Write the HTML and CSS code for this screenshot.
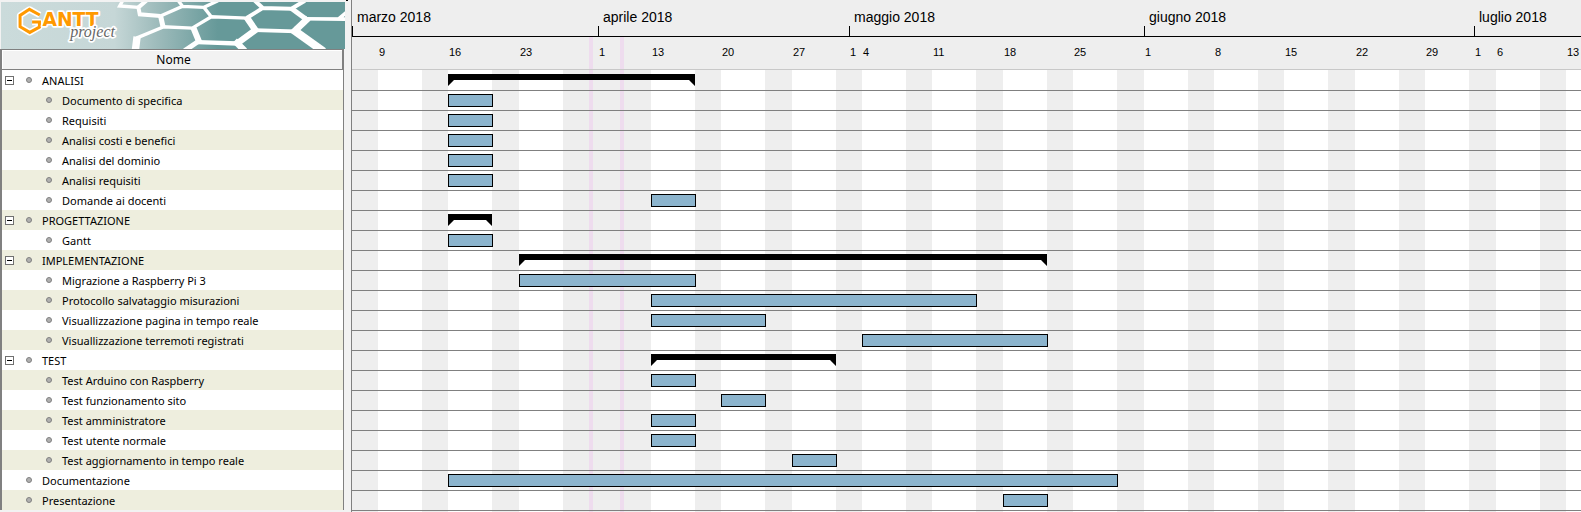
FILE: index.html
```html
<!DOCTYPE html>
<html lang="it">
<head>
<meta charset="utf-8">
<title>GanttProject</title>
<link rel="stylesheet" href="styles.css">
</head>
<body>
<main class="app">
  <section class="tree">
    <svg class="banner" viewBox="0 0 1029 141" preserveAspectRatio="xMinYMin slice" role="img" aria-label="Gantt project">
      <defs>
        <linearGradient id="sky" x1="0" x2="1" y1="0" y2="0">
          <stop offset="0" stop-color="#cbdbdb"/>
          <stop offset="0.33" stop-color="#c6d7d7"/>
          <stop offset="0.45" stop-color="#9fbcbc"/>
          <stop offset="0.63" stop-color="#669999"/>
          <stop offset="1" stop-color="#669999"/>
        </linearGradient>
      </defs>
      <rect width="1029" height="141" fill="url(#sky)"/>
      <g transform="translate(327 -6)" fill="none" stroke="#fff" stroke-width="10">
        <path d="M38 0L28 18L84 22"/>
        <path stroke-width="12" d="M110 0L84 22L88 43L150 48"/>
        <path d="M150 48L216 19L202 0M216 19L280 22L322 2M280 22L302 50"/>
        <path stroke-width="15" d="M150 46L158 82"/>
        <path d="M156 80L245 84L302 50L410 54M160 80L78 114"/>
        <path stroke-width="22" d="M80 110L75 150"/>
        <path stroke-width="18" d="M248 82L266 126"/>
        <path stroke-width="15" d="M266 122L222 152"/>
        <path stroke-width="13" d="M262 126L380 130"/>
        <path stroke-width="19" d="M374 134L434 90L408 52M372 122L402 152"/>
        <path stroke-width="12" d="M408 54L456 24L430 0M452 24L542 26L582 2"/>
        <path stroke-width="15" d="M540 24L584 56"/>
        <path stroke-width="11" d="M576 56L706 57M684 56L708 36M432 90L556 94"/>
        <path stroke-width="20" d="M548 96L592 54"/>
        <path stroke-width="24" d="M546 88L638 154"/>
      </g>
      <path class="halo" d="M116 39L85 22L57 40V74L86 91L115 75V60H93"/>
      <path class="logo-g" d="M116 39L85 22L57 40V74L86 91L115 75V60H93"/>
      <text class="logo-word" x="124" y="73">ANTT</text>
      <text class="logo-sub" x="207" y="106">project</text>
    </svg>
    <table class="tasks">
      <thead><tr><th scope="col">Nome</th></tr></thead>
      <tbody>
        <tr><td><div class="task"><button class="fold" aria-label="Comprimi ANALISI"></button><i class="dot"></i>ANALISI</div></td></tr>
        <tr><td><div class="task sub"><i class="dot"></i>Documento di specifica</div></td></tr>
        <tr><td><div class="task sub"><i class="dot"></i>Requisiti</div></td></tr>
        <tr><td><div class="task sub"><i class="dot"></i>Analisi costi e benefici</div></td></tr>
        <tr><td><div class="task sub"><i class="dot"></i>Analisi del dominio</div></td></tr>
        <tr><td><div class="task sub"><i class="dot"></i>Analisi requisiti</div></td></tr>
        <tr><td><div class="task sub"><i class="dot"></i>Domande ai docenti</div></td></tr>
        <tr><td><div class="task"><button class="fold" aria-label="Comprimi PROGETTAZIONE"></button><i class="dot"></i>PROGETTAZIONE</div></td></tr>
        <tr><td><div class="task sub"><i class="dot"></i>Gantt</div></td></tr>
        <tr><td><div class="task"><button class="fold" aria-label="Comprimi IMPLEMENTAZIONE"></button><i class="dot"></i>IMPLEMENTAZIONE</div></td></tr>
        <tr><td><div class="task sub"><i class="dot"></i>Migrazione a Raspberry Pi 3</div></td></tr>
        <tr><td><div class="task sub"><i class="dot"></i>Protocollo salvataggio misurazioni</div></td></tr>
        <tr><td><div class="task sub"><i class="dot"></i>Visuallizzazione pagina in tempo reale</div></td></tr>
        <tr><td><div class="task sub"><i class="dot"></i>Visuallizzazione terremoti registrati</div></td></tr>
        <tr><td><div class="task"><button class="fold" aria-label="Comprimi TEST"></button><i class="dot"></i>TEST</div></td></tr>
        <tr><td><div class="task sub"><i class="dot"></i>Test Arduino con Raspberry</div></td></tr>
        <tr><td><div class="task sub"><i class="dot"></i>Test funzionamento sito</div></td></tr>
        <tr><td><div class="task sub"><i class="dot"></i>Test amministratore</div></td></tr>
        <tr><td><div class="task sub"><i class="dot"></i>Test utente normale</div></td></tr>
        <tr><td><div class="task sub"><i class="dot"></i>Test aggiornamento in tempo reale</div></td></tr>
        <tr><td><div class="task leaf"><i class="dot"></i>Documentazione</div></td></tr>
        <tr><td><div class="task leaf"><i class="dot"></i>Presentazione</div></td></tr>
      </tbody>
    </table>
  </section>
  <div class="splitter"><i class="arrow"></i></div>
  <section class="chart">
    <div class="calendar">
      <i class="off" style="width:26px"></i><i class="work"></i>
      <i class="off" style="width:26px"></i><i class="work"></i>
      <i class="off" style="width:27px"></i><i class="work"></i>
      <i class="off" style="width:26px"></i><i class="holiday"></i><i class="off" style="width:27px"></i><i class="holiday"></i><i class="off" style="width:27px"></i><i class="work"></i>
      <i class="off" style="width:26px"></i><i class="work"></i>
      <i class="off" style="width:27px"></i><i class="work"></i>
      <i class="off" style="width:26px"></i><i class="work"></i>
      <i class="off" style="width:26px"></i><i class="work"></i>
      <i class="off" style="width:27px"></i><i class="work"></i>
      <i class="off" style="width:26px"></i><i class="work"></i>
      <i class="off" style="width:27px"></i><i class="work"></i>
      <i class="off" style="width:26px"></i><i class="work"></i>
      <i class="off" style="width:26px"></i><i class="work"></i>
      <i class="off" style="width:27px"></i><i class="work"></i>
      <i class="off" style="width:26px"></i><i class="work"></i>
      <i class="off" style="width:27px"></i><i class="work"></i>
      <i class="off" style="width:26px"></i><i class="work"></i>
    </div>
    <div class="plan">
      <div class="months">
        <div class="month" style="width:246px">marzo 2018</div>
        <div class="month" style="width:251px">aprile 2018</div>
        <div class="month" style="width:295px">maggio 2018</div>
        <div class="month" style="width:330px">giugno 2018</div>
        <div class="month" style="width:107px">luglio 2018</div>
      </div>
      <div class="days">
        <span style="width:70px">9</span><span style="width:71px">16</span><span style="width:79px">23</span><span style="width:53px">1</span><span style="width:70px">13</span><span style="width:71px">20</span><span style="width:57px">27</span><span style="width:13px">1</span><span style="width:70px">4</span><span style="width:71px">11</span><span style="width:70px">18</span><span style="width:71px">25</span><span style="width:70px">1</span><span style="width:70px">8</span><span style="width:71px">15</span><span style="width:70px">22</span><span style="width:49px">29</span><span style="width:22px">1</span><span style="width:70px">6</span><span style="width:15px">13</span>
      </div>
      <div class="rows">
        <div class="row"><div class="group" style="margin-left:96px;width:247px"></div></div>
        <div class="row"><div class="bar" style="margin-left:96px;width:45px"></div></div>
        <div class="row"><div class="bar" style="margin-left:96px;width:45px"></div></div>
        <div class="row"><div class="bar" style="margin-left:96px;width:45px"></div></div>
        <div class="row"><div class="bar" style="margin-left:96px;width:45px"></div></div>
        <div class="row"><div class="bar" style="margin-left:96px;width:45px"></div></div>
        <div class="row"><div class="bar" style="margin-left:299px;width:45px"></div></div>
        <div class="row"><div class="group" style="margin-left:96px;width:44px"></div></div>
        <div class="row"><div class="bar" style="margin-left:96px;width:45px"></div></div>
        <div class="row"><div class="group" style="margin-left:167px;width:528px"></div></div>
        <div class="row"><div class="bar" style="margin-left:167px;width:177px"></div></div>
        <div class="row"><div class="bar" style="margin-left:299px;width:326px"></div></div>
        <div class="row"><div class="bar" style="margin-left:299px;width:115px"></div></div>
        <div class="row"><div class="bar" style="margin-left:510px;width:186px"></div></div>
        <div class="row"><div class="group" style="margin-left:299px;width:185px"></div></div>
        <div class="row"><div class="bar" style="margin-left:299px;width:45px"></div></div>
        <div class="row"><div class="bar" style="margin-left:369px;width:45px"></div></div>
        <div class="row"><div class="bar" style="margin-left:299px;width:45px"></div></div>
        <div class="row"><div class="bar" style="margin-left:299px;width:45px"></div></div>
        <div class="row"><div class="bar" style="margin-left:440px;width:45px"></div></div>
        <div class="row"><div class="bar" style="margin-left:96px;width:670px"></div></div>
        <div class="row"><div class="bar" style="margin-left:651px;width:45px"></div></div>
      </div>
    </div>
  </section>
</main>
</body>
</html>
```
FILE: styles.css
```css
* { box-sizing: border-box; }

body {
  margin: 0;
  background: #f0f0f0;
  color: #000;
  font-family: "Noto Sans", "Open Sans", sans-serif;
}

.app {
  display: flex;
  min-height: 100vh;
  overflow: hidden;
}

/* Task tree */
.tree {
  flex: none;
  width: 346px;
  padding-top: 2px;
  background: #f2f2f2;
}

.banner {
  display: block;
  width: 344px;
  height: 47px;
  margin-left: 1px;
}

.halo {
  fill: none;
  stroke: #fff;
  stroke-width: 19;
  stroke-linejoin: round;
}

.logo-g {
  fill: none;
  stroke: #f90;
  stroke-width: 9;
}

.logo-word,
.logo-sub {
  stroke: #fff;
  stroke-width: 10;
  stroke-linejoin: round;
  paint-order: stroke;
}

.logo-word {
  fill: #f90;
  font: bold 56px "DejaVu Sans", sans-serif;
}

.logo-sub {
  fill: #666;
  font: italic 48px "Liberation Serif", serif;
}

.tasks {
  width: 344px;
  border-collapse: separate;
  border-spacing: 0;
  border: solid #808080;
  border-width: 1px 1px 0 2px;
  font-size: 11px;
}

.tasks th {
  height: 20px;
  padding: 1px 0 0 3px;
  border: solid #808080;
  border-width: 0 1px 1px 0;
  background: #f2f2f2;
  font-size: 12px;
  font-weight: normal;
  line-height: 18px;
  box-shadow: inset 1px 1px #fff;
}

.tasks td { padding: 0; background: #fff; }
.tasks tr:nth-child(even) td { background: #eeeede; }

.task {
  display: flex;
  height: 20px;
  padding-left: 3px;
  line-height: 21px;
  white-space: nowrap;
}

.task.leaf { padding-left: 24px; }
.task.sub { padding-left: 44px; }

.fold,
.dot {
  flex: none;
  align-self: center;
}

.fold {
  width: 9px;
  height: 9px;
  margin-right: 12px;
  padding: 0;
  border: 1px solid #707070;
  background: linear-gradient(#000, #000) center / 5px 1px no-repeat #fff;
}

.dot {
  width: 6px;
  height: 6px;
  margin-right: 10px;
  border: 1px solid #808080;
  border-radius: 50%;
  background: #b0b0b0;
}

.splitter {
  flex: none;
  width: 5px;
  background: #f2f2f2;
}

.arrow {
  display: block;
  width: 2px;
  height: 1px;
  background: #000;
}

/* Timeline */
.chart {
  flex: 1;
  display: grid;
  min-width: 0;
  overflow: hidden;
  border-left: 1px solid #808080;
  background: #eee;
}

.calendar,
.plan {
  grid-area: 1 / 1;
  min-width: 0;
}

.calendar { display: flex; }
.calendar > i { flex: none; }

.work {
  width: 44px;
  margin-top: 70px;
  background: #fff;
}

.holiday {
  width: 4px;
  margin-top: 37px;
  background: #eedcee;
}

.months {
  display: flex;
  height: 37px;
  border-bottom: 1px solid #000;
}

.month {
  display: flex;
  flex: none;
  align-items: flex-end;
  gap: 4px;
  font: 14px/38px "Liberation Sans", Arial, sans-serif;
  white-space: nowrap;
}

.month::before {
  content: "";
  width: 1px;
  height: 10px;
  background: #000;
}

.days {
  display: flex;
  height: 33px;
  padding-left: 26px;
  border-bottom: 1px solid #c8c8c8;
  font: 11px/30px "Liberation Sans", Arial, sans-serif;
}

.days span {
  flex: none;
  padding-left: 1px;
}

.rows { padding-top: 1px; }

.row {
  height: 20px;
  padding-top: 3px;
  border-bottom: 1px solid #808080;
}

.bar {
  height: 13px;
  border: 1px solid #000;
  background: #8cb4cd;
}

.group {
  height: 12px;
  background: #000;
  clip-path: polygon(0 0, 100% 0, 100% 100%, calc(100% - 6px) 50%, 6px 50%, 0 100%);
}
```
